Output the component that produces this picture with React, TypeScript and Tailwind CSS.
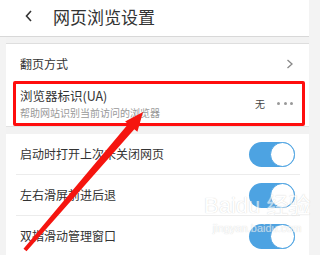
import React from 'react'

const font = { fontFamily: '"Noto Sans CJK SC", "Noto Sans", sans-serif' }

function Toggle() {
  return (
    <div className="relative w-[46px] h-[25px] rounded-full bg-[#4da3e2]">
      <div className="absolute right-0 top-0 w-[25px] h-[25px] rounded-full bg-white border border-[#4da3e2]" />
    </div>
  )
}

function SwitchRow({ label, divider = true }: { label: string; divider?: boolean }) {
  return (
    <div>
      <div className="h-[40px] flex items-center justify-between pl-[14px] pr-[14px]">
        <span className="text-[12px] text-[#333] leading-none">{label}</span>
        <Toggle />
      </div>
      {divider && <div className="ml-[10px] mr-[9px] h-px bg-[#ececec]" />}
    </div>
  )
}

export default function App() {
  return (
    <div className="relative w-[320px] h-[255px] overflow-hidden bg-[#f3f3f3]" style={font}>
      {/* header */}
      <div className="w-[309px] h-[37px] bg-white border-b border-[#d8d8d8] flex items-center">
        <svg width="10" height="14" viewBox="0 0 10 14" className="ml-[24px] mb-[4px]">
          <polyline points="7,2 2.5,7 7,12" fill="none" stroke="#333" strokeWidth="1.6" />
        </svg>
        <span className="ml-[19px] mb-[4px] text-[17px] text-[#333] leading-none">网页浏览设置</span>
      </div>

      <div className="flex">
        <div className="ml-[6px] w-[303px]">
          <div className="h-[7px] bg-[#f2f2f2] border-b border-[#dedede]" />

          {/* 翻页方式 */}
          <div className="h-[37px] bg-white flex items-center justify-between pl-[14px] pr-[15px] pt-[3px]">
            <span className="text-[12px] text-[#333] leading-none">翻页方式</span>
            <svg width="8" height="10" viewBox="0 0 8 10">
              <polyline points="1.5,1 6,5 1.5,9" fill="none" stroke="#888" strokeWidth="1.3" />
            </svg>
          </div>

          {/* UA row */}
          <div className="relative h-[45px] bg-white flex items-center pl-[14px] pr-[16px]">
            <div className="flex-1 flex flex-col pt-[1px]">
              <span className="text-[12.5px] text-[#333] leading-none">浏览器标识(UA)</span>
              <span className="mt-[6px] text-[10px] text-[#999] leading-none">帮助网站识别当前访问的浏览器</span>
            </div>
            <span className="text-[10px] text-[#444] leading-none mr-[12px]">无</span>
            <div className="flex gap-[3.5px]">
              <span className="w-[3px] h-[3px] rounded-full bg-[#999]" />
              <span className="w-[3px] h-[3px] rounded-full bg-[#999]" />
              <span className="w-[3px] h-[3px] rounded-full bg-[#999]" />
            </div>
            <div className="absolute left-[7px] top-0 w-[292px] h-[45px] border-[3px] border-[#ff0d0d] rounded-[2px]" />
          </div>

          <div className="h-[8px] bg-[#f2f2f2] border-t border-[#e2e2e2]" />

          <div className="bg-white">
            <SwitchRow label="启动时打开上次未关闭网页" />
            <SwitchRow label="左右滑屏前进后退" />
            <SwitchRow label="双指滑动管理窗口" divider={false} />
          </div>
        </div>
      </div>

      {/* watermark */}
      <div className="absolute left-[204px] top-[195px] flex flex-col items-center text-[#ffffff] opacity-60" style={{ textShadow: '0 0 1px #aaa' }}>
        <span className="text-[22px] leading-none" style={{ fontFamily: '"Liberation Sans", "Noto Sans CJK SC", sans-serif' }}>Baidu 经验</span>
        <span className="mt-[6px] text-[11px] leading-none" style={{ fontFamily: '"Liberation Sans", sans-serif' }}>jingyan.baidu.com</span>
      </div>

      {/* red arrow annotation */}
      <svg className="absolute left-0 top-0" width="320" height="255" viewBox="0 0 320 255">
        <polygon
          points="23.5,248.7 128.2,124 125.1,121.4 143,112 137.4,131.8 134.3,129.2 26.5,251.3"
          fill="#f5150f"
        />
      </svg>
    </div>
  )
}
